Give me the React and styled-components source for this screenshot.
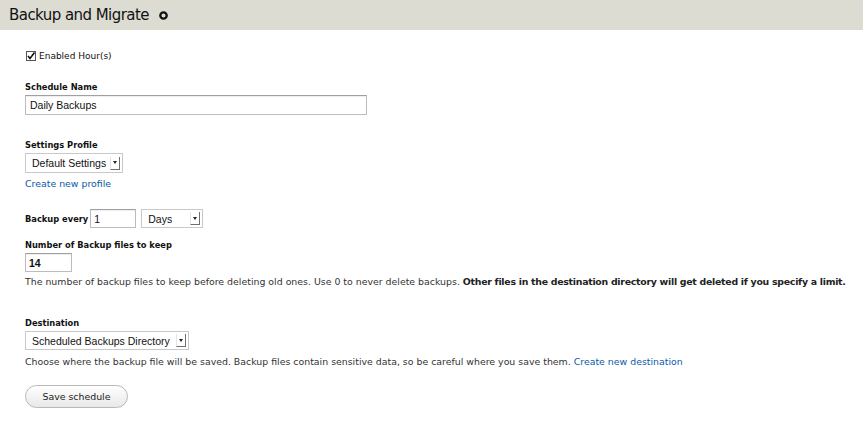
import React from "react";
import styled, { createGlobalStyle } from "styled-components";

const Global = createGlobalStyle`
  html, body { margin: 0; padding: 0; background: #fff; }
  body { font-family: "DejaVu Sans", "Lucida Grande", sans-serif; color: #222; }
`;

const Header = styled.div`
  height: 30px;
  background: #dcdcd3;
  display: flex;
  align-items: center;
  padding-left: 9px;
  gap: 10px;
`;

const Title = styled.h1`
  margin: 0;
  font-size: 15px;
  line-height: 18px;
  font-weight: normal;
  letter-spacing: -0.55px;
  color: #111;
`;

const Form = styled.div`
  padding: 20px 10px 0 25px;
  display: flex;
  flex-direction: column;
  font-size: 9.4px;
`;

const Item = styled.div`
  display: flex;
  flex-direction: column;
  align-items: flex-start;
  margin-top: ${(p) => p.$mt || 0}px;
`;

const Label = styled.label`
  font-weight: bold;
  font-size: 8.3px;
  line-height: 12px;
  margin-bottom: ${(p) => (p.$inline ? 0 : 2)}px;
  color: #111;
`;

const InlineRow = styled.div`
  display: flex;
  align-items: center;
  gap: 2px;
`;

const CheckRow = styled.div`
  display: flex;
  align-items: center;
  gap: 3px;
  height: 12px;
  font-size: 9px;
  margin-left: 1px;
  color: #111;
`;

const TextInput = styled.div`
  box-sizing: border-box;
  width: ${(p) => p.$w}px;
  height: ${(p) => p.$h || 19}px;
  border: 1px solid #bcbcbc;
  border-top-color: #a0a0a0;
  box-shadow: inset 0 1px 1px rgba(0,0,0,0.07);
  background: #fff;
  font-family: "Liberation Sans", Arial, sans-serif;
  font-size: 10.5px;
  display: flex;
  align-items: center;
  padding-left: ${(p) => p.$pl || 4}px;
  color: #111;
  font-weight: ${(p) => (p.$bold ? "bold" : "normal")};
`;

const Select = styled.div`
  box-sizing: border-box;
  width: ${(p) => p.$w}px;
  height: ${(p) => p.$h || 20}px;
  margin-left: ${(p) => p.$ml || 0}px;
  border: 1px solid #c9c9c9;
  background: #fff;
  font-family: "Liberation Sans", Arial, sans-serif;
  font-size: 10.5px;
  white-space: nowrap;
  display: flex;
  align-items: center;
  justify-content: space-between;
  padding-left: 6px;
  color: #111;
`;

const Arrow = styled.span`
  width: 10px;
  height: 13px;
  margin-right: 2px;
  border-left: 1px solid #e4e4e4;
  border-right: 1px solid #6e6e6e;
  border-bottom: 1px solid #6e6e6e;
  box-sizing: border-box;
  display: flex;
  align-items: center;
  justify-content: center;
  &::after {
    content: "";
    border-left: 2.5px solid transparent;
    border-right: 2.5px solid transparent;
    border-top: 3px solid #222;
  }
`;

const Link = styled.a`
  color: #0a5ba8;
  text-decoration: none;
  font-size: 9.4px;
  line-height: 12px;
  margin-top: ${(p) => p.$mt || 0}px;
`;

const Description = styled.div`
  font-size: 9.4px;
  line-height: 14px;
  margin-top: ${(p) => p.$mt || 3}px;
  color: #333;
  white-space: nowrap;
`;

const Strong = styled.strong`
  color: #222;
  letter-spacing: -0.27px;
`;

const Button = styled.button`
  margin-top: 16px;
  width: 103px;
  height: 23px;
  border-radius: 12px;
  border: 1px solid #b8b8b8;
  background: linear-gradient(#ffffff, #e8e8e8);
  font-family: "DejaVu Sans", sans-serif;
  font-size: 9.4px;
  color: #222;
  padding: 0;
  align-self: flex-start;
`;

function Checkbox() {
  return (
    <svg width="10" height="10" viewBox="0 0 10 10">
      <rect x="0.5" y="0.5" width="9" height="9" fill="#fff" stroke="#555" />
      <path d="M2 5 L4 7.5 L8.5 1.5" fill="none" stroke="#111" strokeWidth="1.6" />
    </svg>
  );
}

function GearDot() {
  return (
    <svg width="9" height="9" viewBox="0 0 9 9">
      <circle cx="4.5" cy="4.5" r="3.2" fill="none" stroke="#111" strokeWidth="2.3" />
    </svg>
  );
}

export default function App() {
  return (
    <>
      <Global />
      <Header>
        <Title>Backup and Migrate</Title>
        <GearDot />
      </Header>
      <Form>
        <CheckRow>
          <Checkbox />
          <span>Enabled Hour(s)</span>
        </CheckRow>

        <Item $mt={19}>
          <Label>Schedule Name</Label>
          <TextInput $w={342} $h={20}>Daily Backups</TextInput>
        </Item>

        <Item $mt={24}>
          <Label>Settings Profile</Label>
          <Select $w={98}>
            <span>Default Settings</span>
            <Arrow />
          </Select>
          <Link href="#" $mt={5}>Create new profile</Link>
        </Item>

        <Item $mt={19}>
          <InlineRow>
            <Label $inline>Backup every</Label>
            <TextInput $w={46} $pl={3}>1</TextInput>
            <Select $w={62} $h={19} $ml={3}>
              <span>Days</span>
              <Arrow />
            </Select>
          </InlineRow>
        </Item>

        <Item $mt={11}>
          <Label>Number of Backup files to keep</Label>
          <TextInput $w={47} $bold $pl={3}>14</TextInput>
          <Description>
            The number of backup files to keep before deleting old ones. Use 0 to never delete backups.{" "}
            <Strong>Other files in the destination directory will get deleted if you specify a limit.</Strong>
          </Description>
        </Item>

        <Item $mt={28}>
          <Label>Destination</Label>
          <Select $w={164} $h={19}>
            <span>Scheduled Backups Directory</span>
            <Arrow />
          </Select>
          <Description $mt={5}>
            Choose where the backup file will be saved. Backup files contain sensitive data, so be careful where you save them.{" "}
            <Link href="#">Create new destination</Link>
          </Description>
        </Item>

        <Button>Save schedule</Button>
      </Form>
    </>
  );
}
